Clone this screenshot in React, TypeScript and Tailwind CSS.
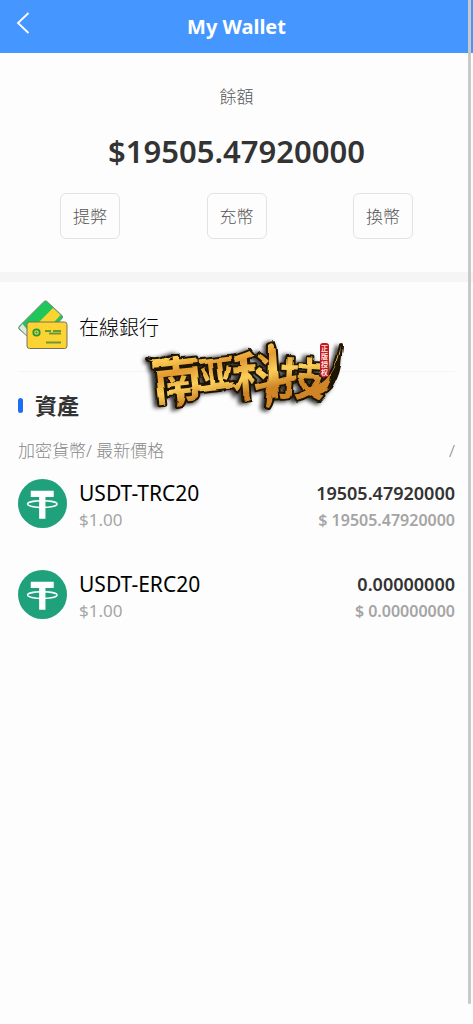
import React from "react";

const actions = ["提弊", "充幣", "換幣"];

const assets = [
  { name: "USDT-TRC20", price: "$1.00", amount: "19505.47920000" },
  { name: "USDT-ERC20", price: "$1.00", amount: "0.00000000" },
];

function BackIcon() {
  return (
    <svg viewBox="0 0 14 22" className="h-[22px] w-3.5" fill="none" stroke="#fff" strokeWidth="1.8" aria-hidden="true">
      <path d="M12.500 1 2 11l10.500 10" />
    </svg>
  );
}

function TetherIcon() {
  return (
    <svg viewBox="0 0 48 48" className="size-[49px] shrink-0" aria-hidden="true">
      <circle cx="24" cy="24" r="24" fill="#1fa27c" />
      <path d="M12.500 11.500h22.500v6.200h-8.100v21.300h-6.200V17.700h-8.200z" fill="#fff" />
      <ellipse cx="23.800" cy="24.600" rx="14.500" ry="3.300" fill="none" stroke="#fff" strokeWidth="1.300" />
    </svg>
  );
}

function CardsIcon() {
  return (
    <svg viewBox="0 0 50 50" className="size-[50px] shrink-0" aria-hidden="true">
      <g strokeLinejoin="round">
        <path d="M1.500 26 26 1.500q1.500-1.500 3 0l15 14q1.500 1.500 0 3L22 42 9 36 1 29q-1-1.500.5-3z" fill="#1fc65a" />
        <path d="M16 27 35 8l7.500 7L28 31z" fill="#fcd432" />
        <path d="M1 28l3.500-4 6 7-1.500 5z" fill="#dfe9df" />
        <path d="M1.500 26 26 1.500q1.500-1.500 3 0l15 14q1.500 1.500 0 3L22 42 9 36 1 29q-1-1.500.5-3z" fill="none" stroke="#7c8885" />
        <rect x="9" y="22" width="40" height="26.500" rx="2.500" fill="#fcd432" stroke="#77705c" />
      </g>
      <circle cx="18.500" cy="32.500" r="3.200" fill="#e8d640" stroke="#27933f" strokeWidth="1.800" />
      <circle cx="18.500" cy="32.500" r="1" fill="#27933f" />
      <path d="M27 31h6M31 33.500h12M35 31h8M28 42.500h15" stroke="#6d983a" strokeWidth="2" />
    </svg>
  );
}

function BrandGlyphs() {
  return (
    <g fontWeight="700" fontFamily="'Noto Sans CJK SC', sans-serif">
      <text x="11" y="62" fontSize="50" transform="rotate(-6 36 42)">南</text>
      <text x="57" y="52" fontSize="37" transform="rotate(-7 75 38)">亚</text>
      <text x="91" y="59" fontSize="53" transform="rotate(-4 116 40)">科</text>
      <text x="138" y="60" fontSize="46" transform="rotate(3 162 44)">技</text>
    </g>
  );
}

function BrushStrokes() {
  return (
    <g>
      <path d="M6 23q10 3 18-1l6-2-5 7q-4 3-8 1-4-3-11-5z" />
      <path d="M33 56q5 4 3 15l4-1q5-6 3-15z" />
      <path d="M128 9q5-4 6 1l-2 48q0 8-4 14l-3-1q3-20 3-62z" />
      <path d="M158 57q20 8 31-5 8-13 11-43-5 26-16 35-11 8-26 13z" />
      <path d="M48 52q9-3 14-2l31-5-4 6-32 4z" />
    </g>
  );
}

function BrandMark() {
  return (
    <svg viewBox="0 0 210 76" className="h-[76px] w-[210px] overflow-visible" role="img" aria-label="南亚科技">
      <defs>
        <linearGradient id="gold" gradientUnits="userSpaceOnUse" x1="0" y1="8" x2="12" y2="74">
          <stop offset="0" stopColor="#ffe98a" />
          <stop offset=".3" stopColor="#fbcb50" />
          <stop offset=".5" stopColor="#e39a30" />
          <stop offset=".75" stopColor="#fbd05a" />
          <stop offset="1" stopColor="#cf8426" />
        </linearGradient>
        <filter id="rough" x="-5%" y="-5%" width="110%" height="110%">
          <feTurbulence type="fractalNoise" baseFrequency=".06" numOctaves="1" seed="7" />
          <feDisplacementMap in="SourceGraphic" xChannelSelector="R" yChannelSelector="G" scale="6" />
        </filter>
        <filter id="haze" x="-10%" y="-10%" width="120%" height="120%">
          <feGaussianBlur stdDeviation="2" />
        </filter>
      </defs>
      <g filter="url(#haze)" fill="#000" stroke="#000" strokeWidth="5" opacity=".8" transform="translate(-3 1)">
        <BrandGlyphs />
        <BrushStrokes />
      </g>
      <g filter="url(#rough)">
        <g fill="#1d1206" stroke="#1d1206" strokeWidth="4" strokeLinejoin="round">
          <BrandGlyphs />
          <BrushStrokes />
        </g>
        <g fill="url(#gold)">
          <BrushStrokes />
          <BrandGlyphs />
        </g>
        <path d="M190 38q8-12 12-32l-2 24q-3 14-9 21l-6 4q5-8 5-17z" fill="#1d1206" />
      </g>
      <rect x="179" y="7" width="9" height="34" rx="3" fill="#c4161c" />
      <g fill="#ffe9e4" fontSize="7" fontWeight="700" fontFamily="'Noto Sans CJK SC', sans-serif" textAnchor="middle">
        <text x="183.500" y="15">正</text>
        <text x="183.500" y="23">版</text>
        <text x="183.500" y="31">授</text>
        <text x="183.500" y="39">权</text>
      </g>
    </svg>
  );
}

export default function App() {
  return (
    <div className="relative min-h-screen bg-[#fdfdfd] font-['Noto_Sans','Noto_Sans_CJK_TC',sans-serif] text-[#333]">
      <header className="grid h-[53px] grid-cols-[1fr_auto_1fr] items-center bg-[#4597ff] px-4 text-white">
        <button type="button" aria-label="Back" className="justify-self-start pb-2">
          <BackIcon />
        </button>
        <h1 className="text-xl font-bold">My Wallet</h1>
      </header>

      <main>
        <section className="border-b-[10px] border-[#f5f5f5] px-[60px] pt-8 pb-[33px] text-center">
          <h2 className="text-[17px] leading-6 font-light text-[#555]">餘額</h2>
          <p className="mt-[22px] text-[31px] leading-10 font-semibold">$19505.47920000</p>
          <div className="mt-[22px] flex justify-between">
            {actions.map((label) => (
              <button
                key={label}
                type="button"
                className="h-[46px] rounded-md border border-[#e3e3e3] px-3 pt-0.5 text-[17px] leading-6 font-light text-[#555]"
              >
                {label}
              </button>
            ))}
          </div>
        </section>

        <section className="relative px-[18px]">
          <a href="#bank" className="flex h-[90px] items-center gap-[11px] border-b border-[#f5f5f5] pb-1 text-xl font-light text-black">
            <CardsIcon />
            <span className="pt-1.5">在線銀行</span>
          </a>
          <div className="pointer-events-none absolute top-[54px] left-1/2 -ml-24">
            <BrandMark />
          </div>
        </section>

        <section className="px-[18px] pt-[15px]">
          <h2 className="flex items-center gap-3 text-[22px] leading-9 font-bold">
            <span className="h-[15px] w-[5px] rounded-sm bg-[#1f6df5]" />
            資產
          </h2>
          <div className="mt-4 flex justify-between text-[17px] leading-6 font-light text-[#888]">
            <span>加密貨幣/ 最新價格</span>
            <span>/</span>
          </div>
          <ul className="mt-4 space-y-[42px]">
            {assets.map((asset) => (
              <li key={asset.name} className="flex h-[49px] items-center gap-3">
                <TetherIcon />
                <div className="grow space-y-1 pt-0.5">
                  <p className="text-[21px] leading-[26px] text-black">{asset.name}</p>
                  <p className="text-[17px] leading-5 text-[#a5a5a5]">{asset.price}</p>
                </div>
                <div className="space-y-1 pt-0.5 text-right font-semibold">
                  <p className="text-lg leading-[26px]">{asset.amount}</p>
                  <p className="text-base leading-5 text-[#a5a5a5]">$ {asset.amount}</p>
                </div>
              </li>
            ))}
          </ul>
        </section>
      </main>

      <div className="absolute top-0 right-0.5 bottom-5 w-[3px] rounded-b bg-[#c9c9c9]" />
    </div>
  );
}
